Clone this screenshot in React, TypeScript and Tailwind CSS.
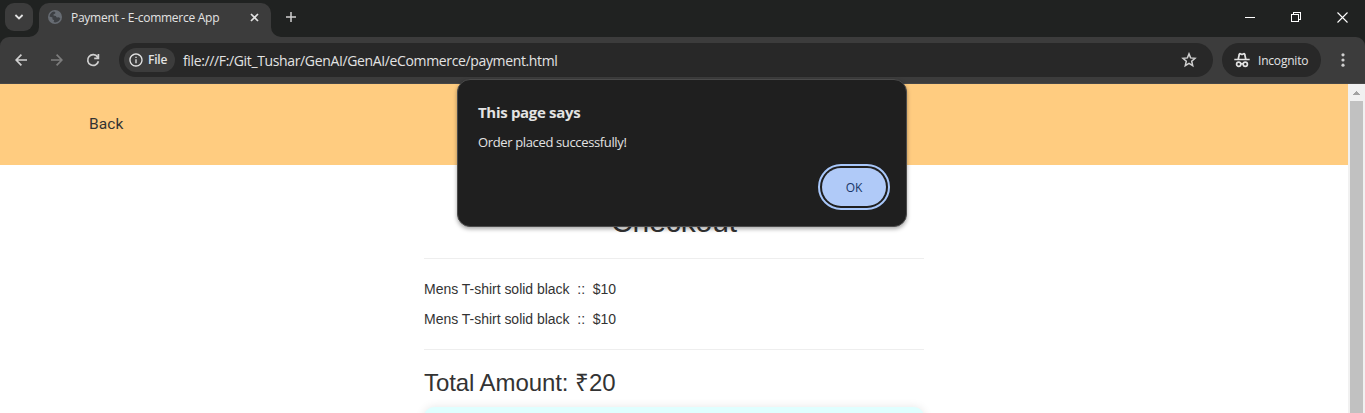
import React from 'react';
import { MdInfoOutline } from 'react-icons/md';

const segoe = "font-['Open_Sans','Noto_Sans',sans-serif]";

function TabStrip() {
  return (
    <div className="flex h-[37px] bg-[#202221] text-[#e3e3e3]">
      <button className="ml-[5px] mt-[3px] flex h-7 w-7 shrink-0 items-center justify-center rounded-[9px] bg-[#3c3c3c]">
        <svg width="10" height="6" viewBox="0 0 10 6" fill="none" stroke="#e3e3e3" strokeWidth="1.8"><path d="M1.4 1 5 4.4 8.6 1" /></svg>
      </button>
      <svg className="mt-[27px] ml-[-4px] shrink-0" width="10" height="10" viewBox="0 0 10 10"><path d="M10 0A10 10 0 0 1 0 10H10Z" fill="#3c3c3c" /></svg>
      <div className="mt-[3px] flex h-[34px] w-[232px] shrink-0 items-start rounded-t-[10px] bg-[#3c3c3c]">
        <svg className="ml-[9px] mt-[7px] shrink-0" width="14" height="14" viewBox="0 0 14 14">
          <circle cx="7" cy="7" r="7" fill="#676c73" />
          <path d="M1.500 6.500C1.700 4 3.500 2 6 1.600L7.500 2.200 7.300 3.600 5.600 4.300 5.500 5.500 7.800 6 8.800 7.500 11 7.300 12.300 8.600C11.700 10.900 9.800 12.500 7.200 12.500L5.600 11.900 6.200 10.200 4.400 9.200 4.500 7.600Z" fill="#3c3f43" />
          <path d="M7.600 1.500C10.300 1.600 12.300 3.600 12.500 6L10.400 5.600 9.200 4.400 7.600 4.100Z" fill="#676c73" />
        </svg>
        <span className="ml-[9px] mt-[7px] w-[176px] whitespace-nowrap text-[12px] leading-4 tracking-[-0.27px]">Payment - E-commerce App</span>
        <svg className="ml-[3px] mt-[10px] shrink-0" width="9" height="9" viewBox="0 0 9 9" stroke="#e3e3e3" strokeWidth="1.7"><path d="m1 1 7 7M8 1 1 8" /></svg>
      </div>
      <svg className="mt-[27px] shrink-0" width="10" height="10" viewBox="0 0 10 10"><path d="M0 0A10 10 0 0 0 10 10H0Z" fill="#3c3c3c" /></svg>
      <svg className="ml-[5px] mt-3 shrink-0" width="10" height="10" viewBox="0 0 10 10" stroke="#d0d0d0" strokeWidth="1.5"><path d="M0 5H10M5 0V10" /></svg>
      <div className="ml-auto flex pr-[17px] pt-3">
        <svg className="mr-[36px]" width="10" height="10" viewBox="0 0 10 10" stroke="#fff" shapeRendering="crispEdges"><path d="M0 5.5H10" /></svg>
        <svg className="mr-[36px]" width="10" height="10" viewBox="0 0 10 10" fill="none" stroke="#fff" shapeRendering="crispEdges"><path d="M.5 2.5h7v7h-7zM2.5 2.5v-2h7v7h-2" /></svg>
        <svg width="11" height="11" viewBox="0 0 11 11" stroke="#fff" strokeWidth="1.1"><path d="m.5.5 10 10M10.500.5l-10 10" /></svg>
      </div>
    </div>
  );
}

function Toolbar() {
  return (
    <div className="bg-[#202221]">
      <div className="flex h-[47px] items-center rounded-t-[9px] border-b border-[#474747] bg-[#3c3c3c] text-[#e3e3e3]">
        <svg className="ml-[15px] shrink-0" width="12" height="12" viewBox="0 0 12 12" fill="none" stroke="#d0d0d0" strokeWidth="1.7"><path d="M12 6H1.200M6.400.6 1.100 6l5.300 5.400" /></svg>
        <svg className="ml-6 shrink-0" width="12" height="12" viewBox="0 0 12 12" fill="none" stroke="#7d7d7d" strokeWidth="1.7"><path d="M0 6H10.800M5.600.6 10.900 6l-5.300 5.400" /></svg>
        <svg className="ml-[23px] shrink-0" width="14" height="14" viewBox="0 0 14 14" fill="none" stroke="#d0d0d0" strokeWidth="1.7"><path d="M12.400 8.200A5.400 5.400 0 1 1 11.600 4L12.300 5.200M12.400 1V5.300H8.200" /></svg>
        <div className="ml-[19px] flex h-[34px] w-[1094px] shrink-0 items-center rounded-full bg-[#282828] pl-[5px] pr-4">
          <div className="flex h-6 w-[51px] items-center rounded-full bg-[#3c3c3c] pl-1">
            <MdInfoOutline size={16} className="shrink-0" />
            <span className="ml-1 text-[12px] font-semibold leading-4 tracking-[-0.2px]">File</span>
          </div>
          <span className="ml-2 mt-px whitespace-nowrap text-[14px] leading-5 tracking-[-0.36px]">file:///F:/Git_Tushar/GenAI/GenAI/eCommerce/payment.html</span>
          <svg className="ml-auto shrink-0" width="16" height="16" viewBox="0 0 16 16" fill="none" stroke="#d0d0d0" strokeWidth="1.5"><path d="M8 1.900 9.600 5.900 14 6.300 10.700 9.200 11.700 13.600 8 11.300 4.300 13.600 5.300 9.200 2 6.300 6.400 5.900Z" /></svg>
        </div>
        <div className="ml-[9px] flex h-[34px] w-[99px] shrink-0 items-center rounded-full bg-[#282828] pl-3">
          <svg className="shrink-0" width="16" height="16" viewBox="0 0 16 16" fill="none" stroke="#e3e3e3" strokeWidth="1.7">
            <path d="M.3 7.500H15.700M4.200 7.300l1.100-5c.1-.6.600-.8 1-.6l1 .5c.5.200.9.200 1.400 0l1-.5c.4-.2.900 0 1 .6l1.100 5" />
            <circle cx="4.700" cy="12.200" r="2.100" /><circle cx="11.300" cy="12.200" r="2.100" /><path d="M6.700 11.900Q8 11.300 9.300 11.900" />
          </svg>
          <span className="ml-2 mt-px text-[12px] leading-4 tracking-[-0.2px]">Incognito</span>
        </div>
        <svg className="ml-5 shrink-0" width="4" height="14" viewBox="0 0 4 14" fill="#d0d0d0"><circle cx="2" cy="1.800" r="1.600" /><circle cx="2" cy="7" r="1.600" /><circle cx="2" cy="12.200" r="1.600" /></svg>
      </div>
    </div>
  );
}

function AlertDialog() {
  return (
    <div role="alertdialog" className={`absolute left-[457px] top-[79px] flex h-[148px] w-[450px] flex-col rounded-[13px] border border-[#4b4b4b] bg-[#1f1f1f] px-5 pt-[21px] text-[#e3e3e3] shadow-[0_2px_4px_rgba(0,0,0,0.35)] ${segoe}`}>
      <h2 className="whitespace-nowrap text-[15px] font-bold leading-[22px] tracking-[-0.32px]">This page says</h2>
      <p className="mt-[10px] whitespace-nowrap text-[13px] leading-[18px] tracking-[-0.36px]">Order placed successfully!</p>
      <button className="ml-auto mr-[-4px] mt-[13px] flex h-[46px] w-[72px] items-center justify-center rounded-full border-2 border-[#a8c7fa] p-[2px] text-[12px] font-medium text-[#183667]">
        <span className="flex h-full w-full items-center justify-center rounded-full bg-[#b0caf8] pt-px">OK</span>
      </button>
    </div>
  );
}

function Checkout() {
  const items = [{ name: 'Mens T-shirt solid black', price: 10 }, { name: 'Mens T-shirt solid black', price: 10 }];
  return (
    <main className="mx-auto flex w-[500px] flex-col pt-10">
      <h1 className="text-center text-[30px] leading-[33px] tracking-[-0.1px]">Checkout</h1>
      <hr className="mt-5 border-[#eee]" />
      <div className="mt-[15px]">
        {items.map((item, i) => (
          <p key={i} className="h-[30px] whitespace-pre text-[14px] leading-[30px] tracking-[-0.02px]">{item.name}{'  ::  $'}{item.price}</p>
        ))}
      </div>
      <hr className="mt-[15px] border-[#eee]" />
      <h2 className="mt-5 text-[24px] leading-[26px] tracking-[-0.08px]">Total Amount: ₹20</h2>
      <div className="mt-[11px] h-20 shrink-0 rounded-[10px] bg-[#e0ffff] shadow-[0_0_10px_rgba(0,0,0,0.1)]" />
    </main>
  );
}

export default function App() {
  return (
    <div className="relative flex h-[413px] w-[1365px] flex-col overflow-hidden bg-white">
      <div className={segoe}>
        <TabStrip />
        <Toolbar />
      </div>
      <div className="flex h-[329px] overflow-hidden font-['Liberation_Sans',Arial,sans-serif] text-[#333]">
        <div className="h-full flex-1 overflow-hidden">
          <header className="flex h-[81px] items-center bg-[#ffcc80] pl-[89px] font-['Roboto',sans-serif] text-[15.5px] tracking-[0.1px]"><a>Back</a></header>
          <Checkout />
        </div>
        <div className="flex w-[17px] flex-col items-center bg-[#f1f1f1]">
          <svg className="mt-[7px] shrink-0" width="7" height="4" viewBox="0 0 7 4" fill="#a3a3a3" shapeRendering="crispEdges"><path d="M3.500 0 7 4H0Z" /></svg>
          <div className="mt-[6px] w-[13px] flex-1 bg-[#c1c1c1]" />
        </div>
      </div>
      <AlertDialog />
    </div>
  );
}
